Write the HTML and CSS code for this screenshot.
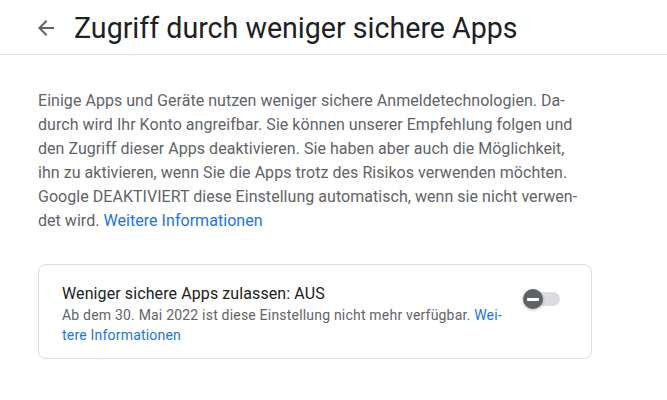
FILE: index.html
```html
<!DOCTYPE html>
<html lang="de">
<head>
<meta charset="utf-8">
<link rel="stylesheet" href="styles.css">
</head>
<body>
<header class="topbar">
  <button class="back" aria-label="Zurück">
    <svg width="24" height="24" viewBox="0 0 24 24"><path d="M20 11H7.83l5.59-5.59L12 4l-8 8 8 8 1.41-1.41L7.83 13H20v-2z" fill="#5f6368"/></svg>
  </button>
  <h1 class="title">Zugriff durch weniger sichere Apps</h1>
</header>
<main class="content">
  <p class="intro">Einige Apps und Geräte nutzen weniger sichere Anmeldetechnologien. Da-<br>durch wird Ihr Konto angreifbar. Sie können unserer Empfehlung folgen und<br>den Zugriff dieser Apps deaktivieren. Sie haben aber auch die Möglichkeit,<br>ihn zu aktivieren, wenn Sie die Apps trotz des Risikos verwenden möchten.<br>Google DEAKTIVIERT diese Einstellung automatisch, wenn sie nicht verwen-<br>det wird. <a href="#" class="link">Weitere Informationen</a></p>
  <section class="card">
    <div class="card-text">
      <div class="card-title">Weniger sichere Apps zulassen: AUS</div>
      <div class="card-sub">Ab dem 30. Mai 2022 ist diese Einstellung nicht mehr verfügbar. <a href="#" class="link">Wei-<br>tere Informationen</a></div>
    </div>
    <div class="toggle" aria-hidden="true">
      <span class="track"></span>
      <span class="knob"><span class="minus"></span></span>
    </div>
  </section>
</main>
</body>
</html>
```
FILE: styles.css
```css
* { box-sizing: border-box; }
html, body { margin: 0; padding: 0; background: #fff; }
body { font-family: Roboto, "Noto Sans", Arial, sans-serif; color: #202124; }

.topbar {
  display: flex;
  align-items: center;
  height: 55px;
  border-bottom: 1px solid #dadce0;
  padding-left: 34px;
}
.back {
  width: 24px; height: 24px;
  padding: 0; border: 0; background: none;
  display: flex; align-items: center; justify-content: center;
  margin-right: 16px;
  margin-top: 2px;
}
.title {
  margin: 0;
  font-size: 28.6px;
  font-weight: 400;
  color: #202124;
  letter-spacing: 0;
  margin-top: 1px;
}

.content { padding: 34px 38px 0 38px; }
.intro {
  margin: 0;
  font-size: 16px;
  line-height: 24px;
  color: #5f6368;
  letter-spacing: 0.04px;
}
.link { color: #1a73e8; text-decoration: none; }

.card {
  margin-top: 31px;
  width: 554px;
  border: 1px solid #dadce0;
  border-radius: 8px;
  padding: 18px 23px 13px 23px;
  display: flex;
  align-items: flex-start;
  justify-content: space-between;
}
.card-title {
  font-size: 16px;
  line-height: 22px;
  color: #202124;
  letter-spacing: 0.1px;
}
.card-sub {
  font-size: 14px;
  line-height: 20px;
  color: #5f6368;
  letter-spacing: 0.2px;
  width: 460px;
}
.toggle {
  position: relative;
  width: 38px;
  height: 20px;
  margin-top: 6px;
  margin-right: 7px;
}
.track {
  position: absolute;
  left: 4px; top: 3px;
  width: 33px; height: 14px;
  border-radius: 7px;
  background: #dadce0;
}
.knob {
  position: absolute;
  left: 0; top: 0;
  width: 20px; height: 20px;
  border-radius: 50%;
  background: #5f6368;
  box-shadow: 0 1px 3px rgba(0,0,0,0.3);
  display: flex; align-items: center; justify-content: center;
}
.minus {
  width: 12px; height: 3px;
  background: #fff;
  border-radius: 1px;
}
```
